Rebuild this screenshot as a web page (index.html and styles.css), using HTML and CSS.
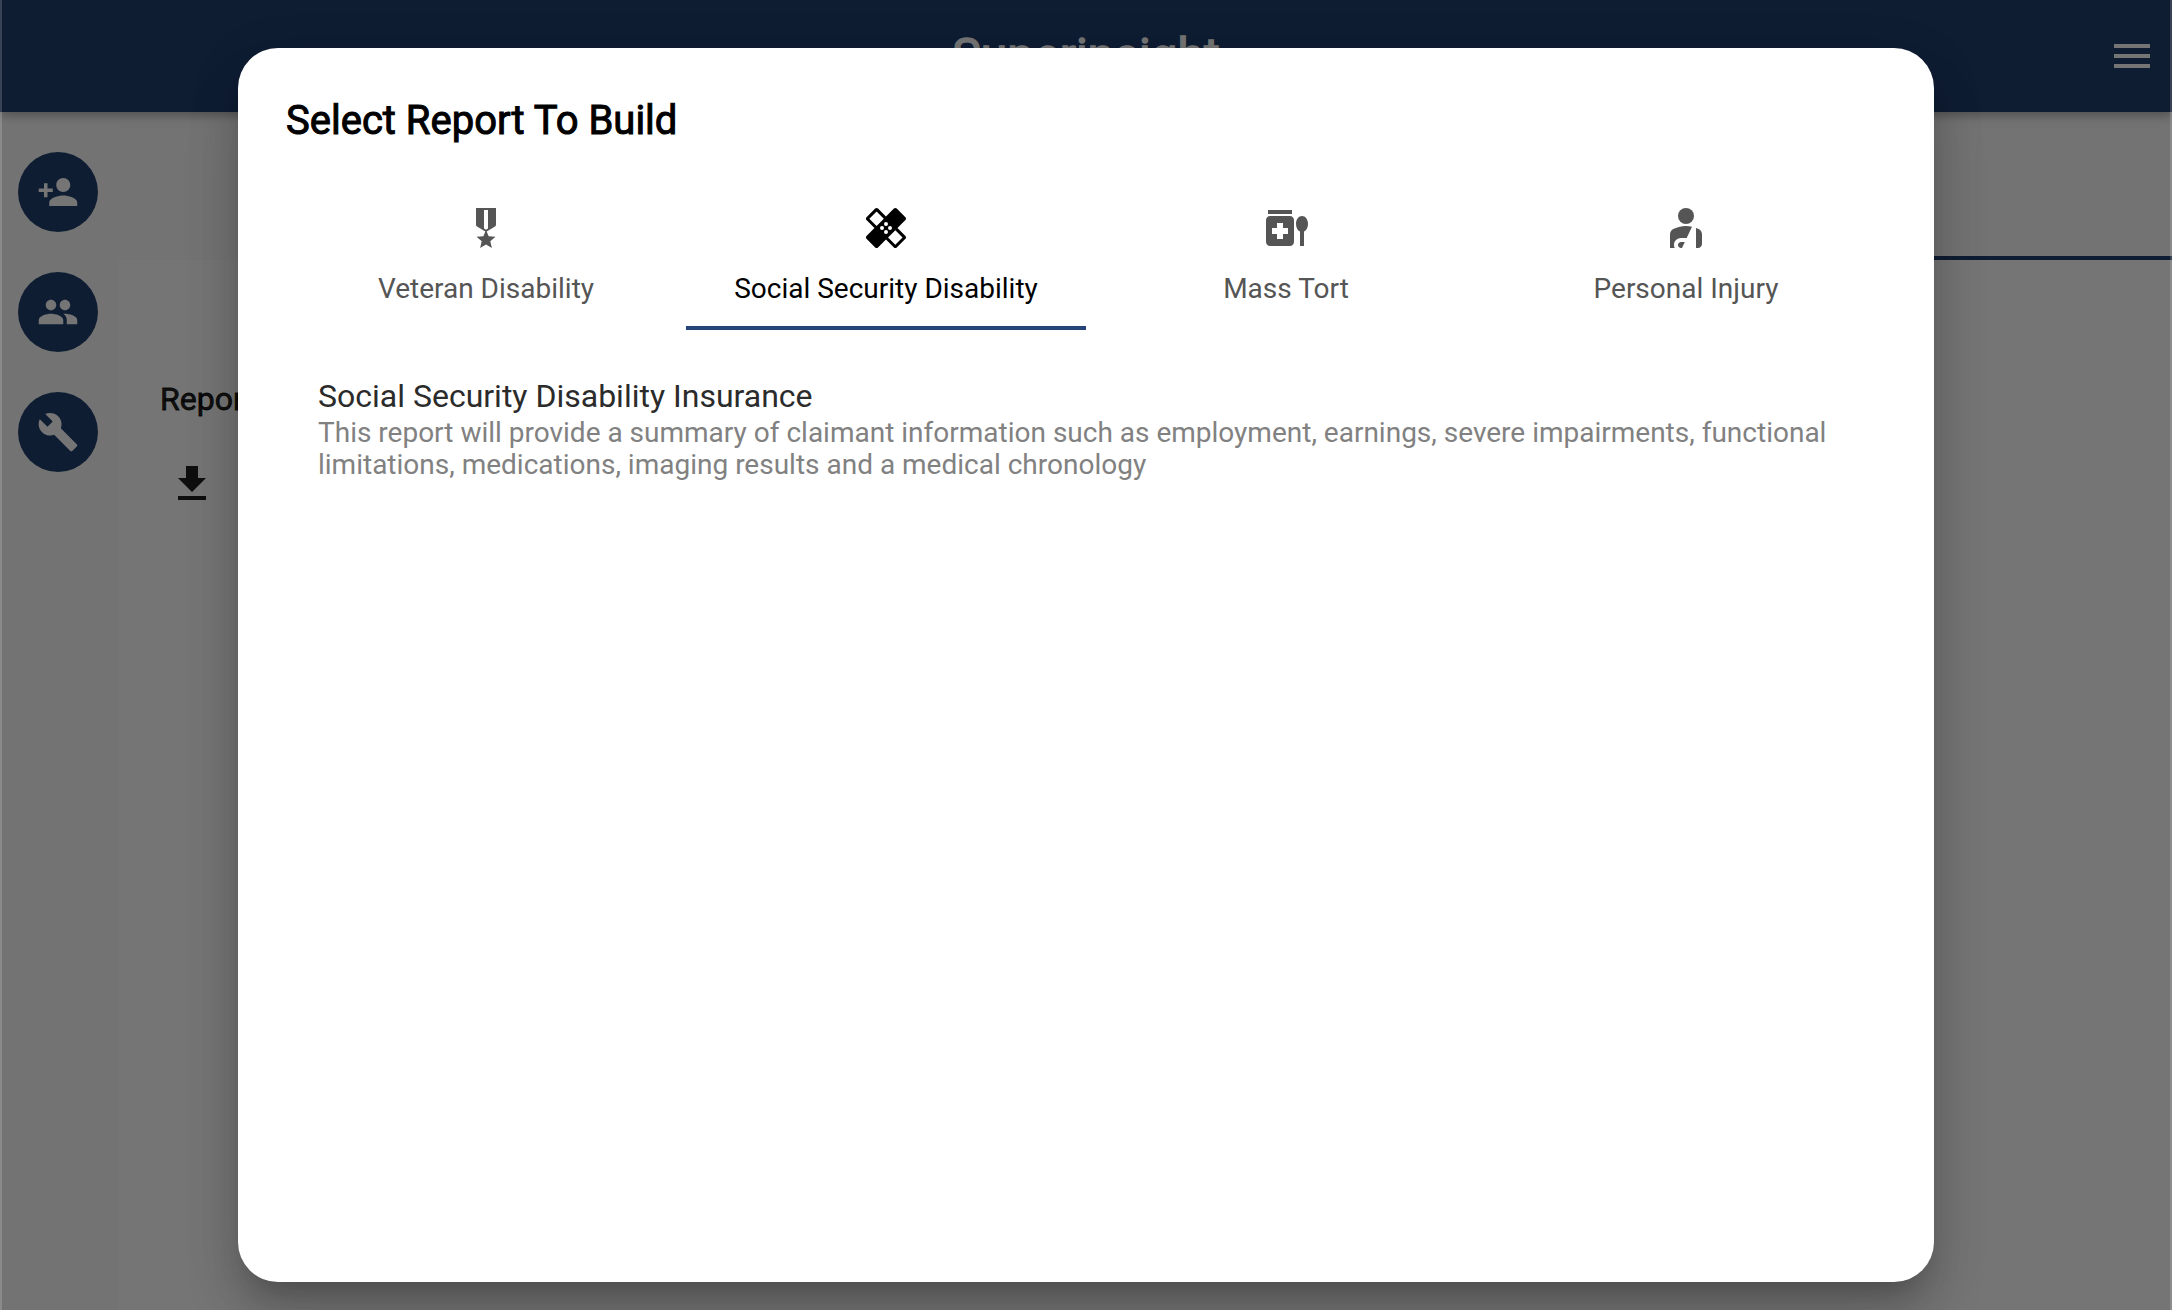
FILE: index.html
```html
<!DOCTYPE html>
<html lang="en">
<head>
<meta charset="utf-8">
<title>Superinsight</title>
<link rel="stylesheet" href="styles.css">
</head>
<body>
<div class="app">
  <header class="appbar">
    <h1 class="brand">Superinsight</h1>
    <svg class="icon menu" viewBox="0 0 24 24"><path d="M3 18h18v-2H3v2zm0-5h18v-2H3v2zm0-7v2h18V6H3z"/></svg>
  </header>
  <div class="body">
    <nav class="sidebar">
      <div class="fab"><svg viewBox="0 0 24 24"><path d="M15 12c2.21 0 4-1.79 4-4s-1.79-4-4-4-4 1.79-4 4 1.79 4 4 4zm-9-2V7H4v3H1v2h3v3h2v-3h3v-2H6zm9 4c-2.67 0-8 1.34-8 4v2h16v-2c0-2.66-5.33-4-8-4z"/></svg></div>
      <div class="fab"><svg viewBox="0 0 24 24"><path d="M16 11c1.66 0 2.99-1.34 2.99-3S17.66 5 16 5c-1.66 0-3 1.34-3 3s1.34 3 3 3zm-8 0c1.66 0 2.99-1.34 2.99-3S9.66 5 8 5C6.34 5 5 6.34 5 8s1.34 3 3 3zm0 2c-2.33 0-7 1.17-7 3.5V19h14v-2.500c0-2.330-4.670-3.500-7-3.500zm8 0c-.29 0-.62.02-.97.05 1.160.84 1.970 1.970 1.970 3.450V19h6v-2.500c0-2.330-4.670-3.500-7-3.500z"/></svg></div>
      <div class="fab"><svg viewBox="0 0 24 24"><path d="M22.700 19l-9.100-9.100c.9-2.300.4-5-1.500-6.900-2-2-5-2.400-7.400-1.300L9 6 6 9 1.600 4.700C.4 7.100.9 10.100 2.900 12.100c1.900 1.900 4.600 2.400 6.900 1.500l9.100 9.100c.4.4 1 .4 1.400 0l2.300-2.300c.5-.4.5-1.100.1-1.400z"/></svg></div>
    </nav>
    <main class="content">
      <div class="subheader"><div class="subheader-line"></div></div>
      <section class="reports">
        <h2 class="reports-title">Report</h2>
        <svg class="icon download" viewBox="0 0 24 24"><path d="M19 9h-4V3H9v6H5l7 7 7-7zM5 18v2h14v-2H5z"/></svg>
      </section>
    </main>
  </div>
</div>
<div class="barrier">
  <div class="dialog">
    <h2 class="dialog-title">Select Report To Build</h2>
    <div class="tabs">
      <div class="tab">
        <svg class="icon" viewBox="0 0 24 24"><path d="M17 10.430V2H7v8.430c0 .35.18.68.49.86l4.180 2.510-.99 2.340-3.410.29 2.590 2.240L9.070 22 12 20.230 14.930 22l-.78-3.330 2.590-2.240-3.410-.29-.99-2.340 4.180-2.510c.3-.18.48-.5.48-.86zm-4 1.800-1 .6-1-.6V3h2v9.230z"/></svg>
        <span>Veteran Disability</span>
      </div>
      <div class="tab tab-active">
        <svg class="icon" viewBox="0 0 24 24"><path fill-rule="evenodd" d="M17.730 12.020l3.980-3.980c.39-.39.39-1.020 0-1.410l-4.340-4.340c-.39-.39-1.020-.39-1.410 0l-3.980 3.980L8 2.290C7.800 2.100 7.550 2 7.290 2c-.25 0-.51.1-.7.29L2.250 6.630c-.39.39-.39 1.020 0 1.410l3.980 3.980L2.250 16c-.39.39-.39 1.020 0 1.410l4.340 4.340c.39.39 1.020.39 1.410 0l3.980-3.980 3.980 3.980c.2.2.45.29.71.29s.51-.1.71-.29l4.340-4.340c.39-.39.39-1.020 0-1.410l-3.990-3.980zM12 9a1 1 0 1 1 0 2 1 1 0 0 1 0-2zm-4.710 1.960L3.660 7.340l3.630-3.630 3.620 3.620-3.620 3.630zM10 13a1 1 0 1 1 0-2 1 1 0 0 1 0 2zm2 2a1 1 0 1 1 0-2 1 1 0 0 1 0 2zm2-4a1 1 0 1 1 0 2 1 1 0 0 1 0-2zm2.660 9.340l-3.630-3.620 3.630-3.630 3.620 3.620-3.620 3.630z"/></svg>
        <span>Social Security Disability</span>
      </div>
      <div class="tab">
        <svg class="icon" viewBox="0 0 24 24"><path fill-rule="evenodd" d="M3 3h12v2H3zM14 6H4c-1.100 0-2 .9-2 2v11c0 1.100.9 2 2 2h10c1.100 0 2-.9 2-2V8c0-1.100-.9-2-2-2zm-1 9h-2.500v2.500h-3V15H5v-3h2.500V9.500h3V12H13v3zM20 6c-1.680 0-3 1.760-3 4 0 1.770.83 3.220 2 3.760V21h2v-7.240c1.170-.54 2-1.990 2-3.760 0-2.240-1.320-4-3-4z"/></svg>
        <span>Mass Tort</span>
      </div>
      <div class="tab">
        <svg class="icon" viewBox="0 0 24 24"><circle cx="12" cy="6" r="4"/><path d="M17 22h1c1.100 0 2-.9 2-2v-4.780c0-1.120-.61-2.150-1.610-2.660-.43-.22-.9-.43-1.390-.62V22zM12.340 17L15 11.330c-.95-.21-1.960-.33-3-.33-2.530 0-4.710.7-6.390 1.560C4.610 13.070 4 14.100 4 15.220V22h2.340c-.22-.45-.34-.96-.34-1.500C6 18.570 7.570 17 9.500 17h2.840zM10 22l1.410-3H9.500c-.83 0-1.500.67-1.500 1.500S8.670 22 9.500 22h.5z"/></svg>
        <span>Personal Injury</span>
      </div>
    </div>
    <div class="option">
      <div class="option-title">Social Security Disability Insurance</div>
      <div class="option-text">This report will provide a summary of claimant information such as employment, earnings, severe impairments, functional<br>limitations, medications, imaging results and a medical chronology</div>
    </div>
  </div>
</div>
</body>
</html>
```
FILE: styles.css
```css
* { box-sizing: border-box; }
body {
  margin: 0;
  height: 1310px;
  overflow: hidden;
  font-family: Roboto, "Liberation Sans", sans-serif;
  background: #fff;
}
h1, h2 { margin: 0; font-weight: 400; -webkit-text-stroke: 1px currentColor; }
svg { display: block; fill: currentColor; }
.icon { width: 48px; height: 48px; }

.app { height: 1310px; display: flex; flex-direction: column; }
.appbar {
  position: relative;
  height: 112px;
  flex: none;
  display: grid;
  grid-template-columns: 1fr auto 1fr;
  align-items: center;
  padding: 0 16px;
  background: #21416f;
  color: #fff;
  box-shadow: 0 4px 8px rgba(0, 0, 0, .2), 0 2px 14px rgba(0, 0, 0, .13);
}
.brand { grid-column: 2; font-size: 48px; line-height: 56px; -webkit-text-stroke-width: 1.4px; }
.menu { justify-self: end; }

.body { flex: 1; display: flex; }
.sidebar {
  width: 118px;
  padding: 40px 0 0 18px;
  display: flex;
  flex-direction: column;
  gap: 40px;
  background: #fbfbfb;
}
.fab {
  width: 80px;
  height: 80px;
  border-radius: 50%;
  display: grid;
  place-items: center;
  background: #21416f;
  color: #fff;
}
.fab svg { width: 42px; height: 42px; }
.content { flex: 1; }
.subheader {
  height: 148px;
  display: flex;
  align-items: flex-end;
  justify-content: flex-end;
  background: #fafafa;
}
.subheader-line { width: 50%; height: 4px; background: #21416f; }
.reports { padding: 120px 42px 0; color: rgba(0, 0, 0, .87); }
.reports-title { font-size: 32px; line-height: 38px; -webkit-text-stroke-width: .8px; }
.download { margin: 42px 0 0 8px; }

.barrier {
  position: absolute;
  inset: 0;
  padding: 48px 238px 28px;
  background: rgba(0, 0, 0, .54);
  overflow: hidden;
  box-shadow: inset 2px 0 rgba(255, 255, 255, .17), inset -2px 0 rgba(255, 255, 255, .17);
}
.dialog {
  height: 1234px;
  padding: 49px 48px 48px;
  border-radius: 40px;
  background: #fff;
  box-shadow: 0 22px 30px -14px rgba(0, 0, 0, .2), 0 40px 60px 0 rgba(0, 0, 0, .1), 0 14px 50px 4px rgba(0, 0, 0, .12);
}
.dialog-title { font-size: 40px; line-height: 48px; color: #000; }
.tabs { display: flex; margin-top: 41px; height: 144px; }
.tab {
  flex: 1;
  display: flex;
  flex-direction: column;
  align-items: center;
  padding-top: 18px;
  gap: 21px;
  font-size: 28px;
  line-height: 32px;
  color: #555;
}
.tab-active { color: #000; border-bottom: 4px solid #284377; }
.option { padding: 47px 32px 0; }
.option-title { font-size: 32px; line-height: 38px; color: #2b2b2b; }
.option-text { margin-top: 2px; font-size: 28px; line-height: 32px; color: #818181; white-space: nowrap; }
```
